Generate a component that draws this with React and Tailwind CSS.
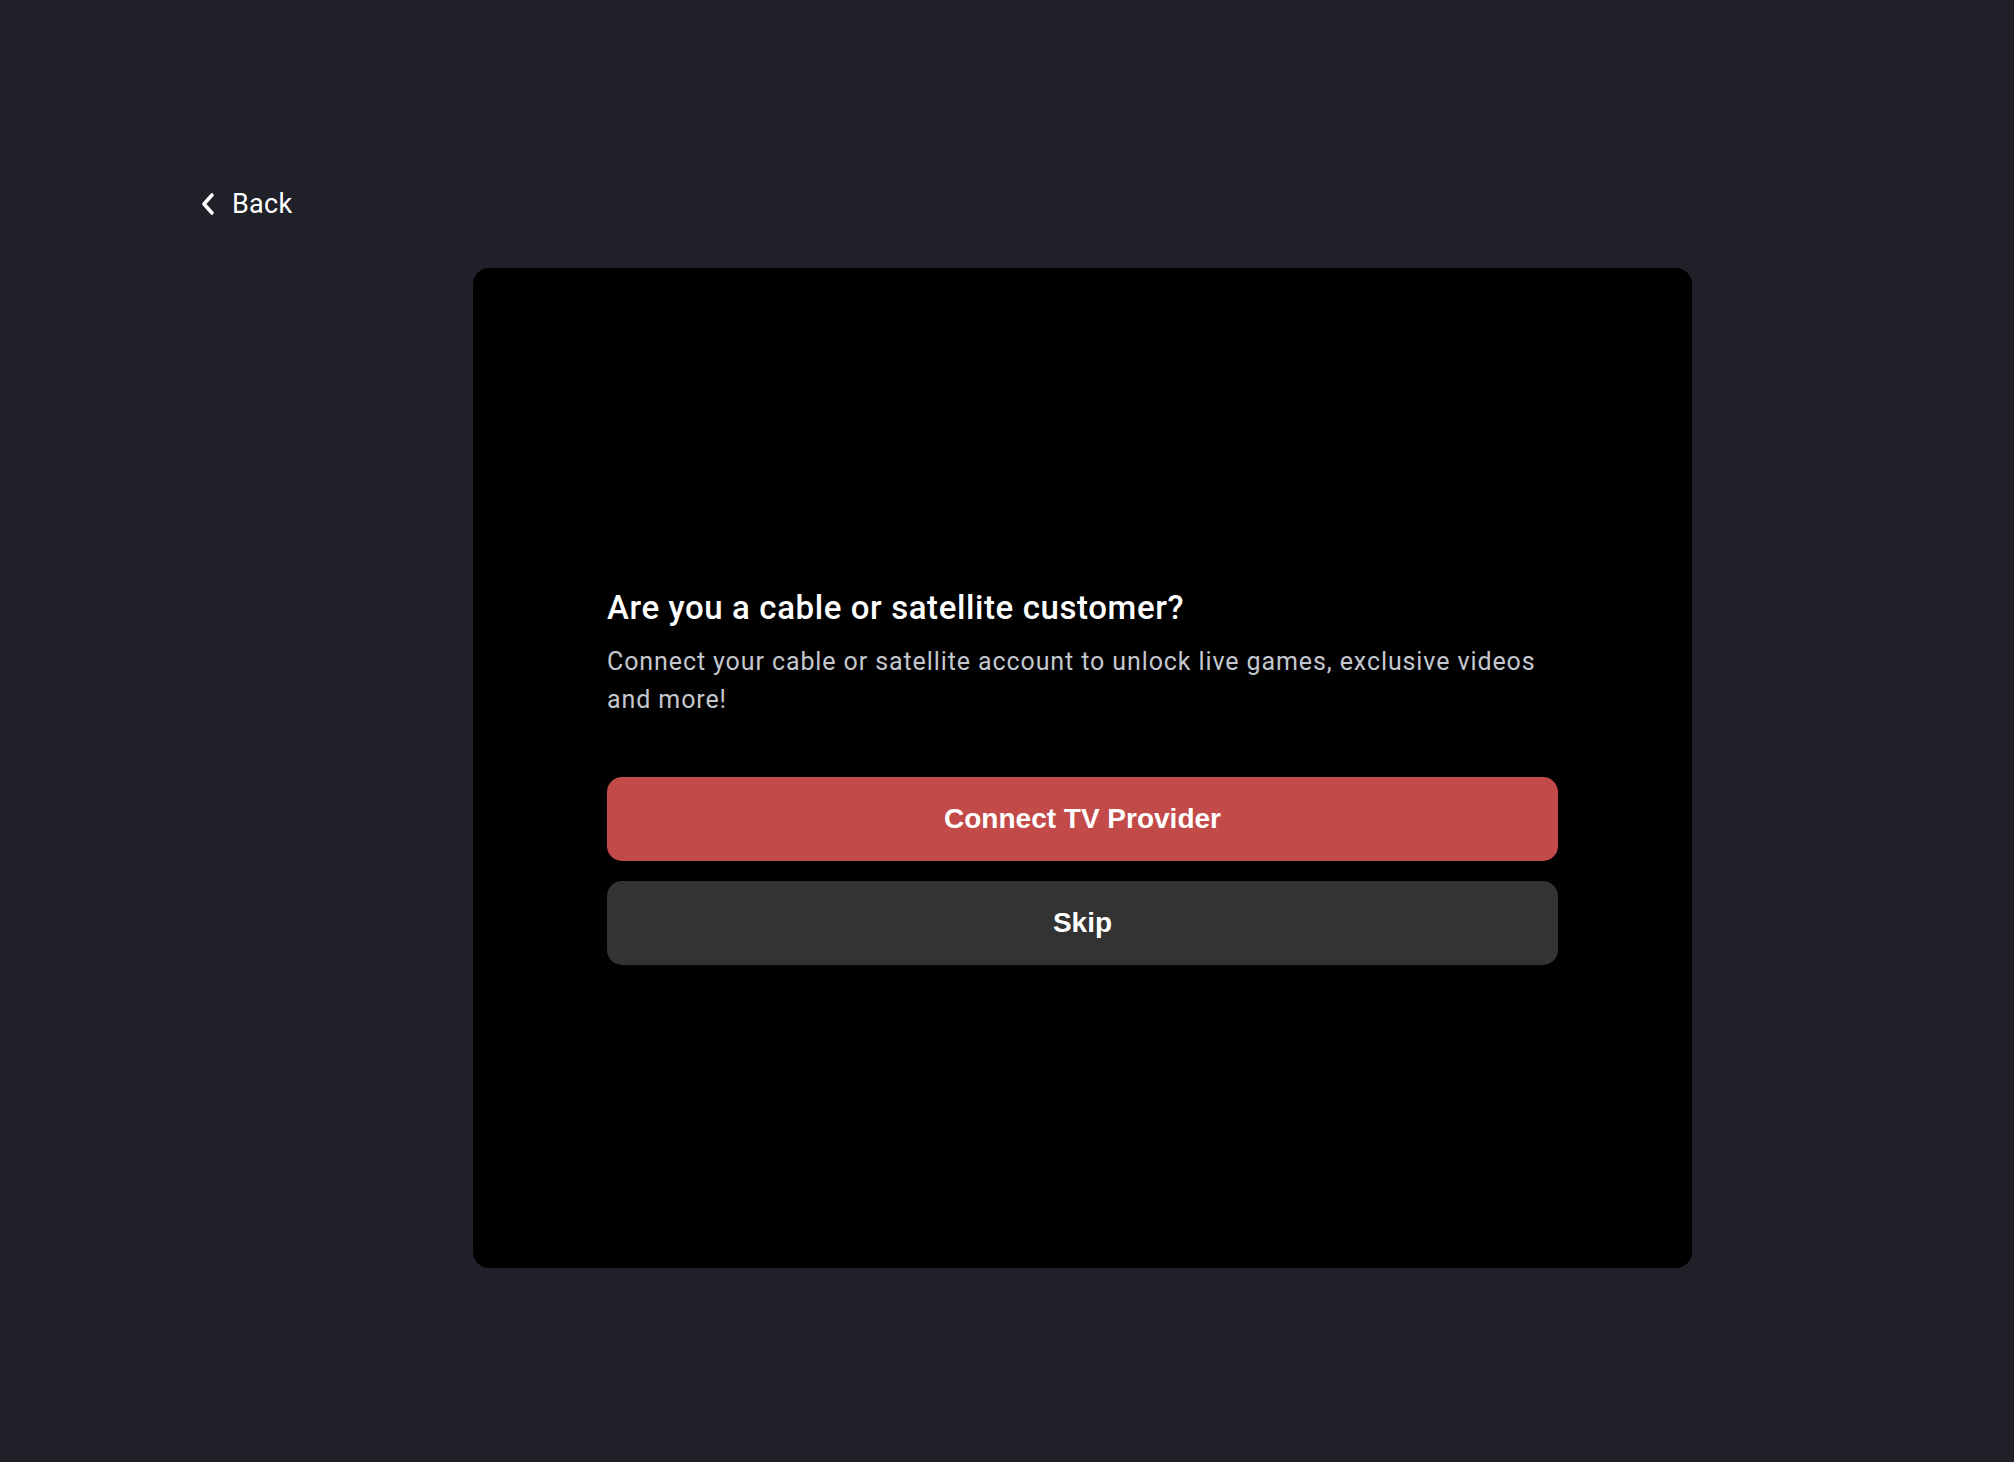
import React from 'react';

const PrimaryButton = ({ children }) => (
    <button className="h-[84px] w-full rounded-[15px] bg-[#c24a48] text-[28px] font-bold text-white" style={{ fontFamily: '"Liberation Sans", Arial, sans-serif' }}>
        {children}
    </button>
);

const SecondaryButton = ({ children }) => (
    <button className="h-[84px] w-full rounded-[15px] bg-[#333333] text-[28px] font-bold text-white" style={{ fontFamily: '"Liberation Sans", Arial, sans-serif' }}>
        {children}
    </button>
);

const App = () => {
    return (
        <div className="min-h-[1462px] w-full bg-[#1f2028] pl-[200px] pt-[184px]" style={{ fontFamily: 'Roboto, "Noto Sans", sans-serif' }}>
            {/* Back link */}
            <button className="flex h-[40px] items-center gap-[16px] text-[27px] tracking-[0.3px] text-white">
                <svg width="16" height="24" viewBox="0 0 16 24" fill="none">
                    <path d="M12 3 L4 12 L12 21" stroke="currentColor" strokeWidth="3.6" strokeLinecap="round" strokeLinejoin="round" />
                </svg>
                <span>Back</span>
            </button>

            {/* Provider prompt card */}
            <div className="ml-[273px] mt-[44px] flex h-[1000px] w-[1219px] flex-col rounded-[16px] bg-black px-[134px] pt-[320px]">
                <h1 className="text-[33px] font-medium leading-[40px] tracking-[0.6px] text-white">
                    Are you a cable or satellite customer?
                </h1>
                <p className="mt-[15px] text-[25px] leading-[38px] tracking-[0.9px] text-[#c4c8ce]">
                    Connect your cable or satellite account to unlock live games, exclusive videos and more!
                </p>
                <div className="mt-[58px] flex flex-col gap-[20px]">
                    <PrimaryButton>Connect TV Provider</PrimaryButton>
                    <SecondaryButton>Skip</SecondaryButton>
                </div>
            </div>
        </div>
    );
};

export default App;
